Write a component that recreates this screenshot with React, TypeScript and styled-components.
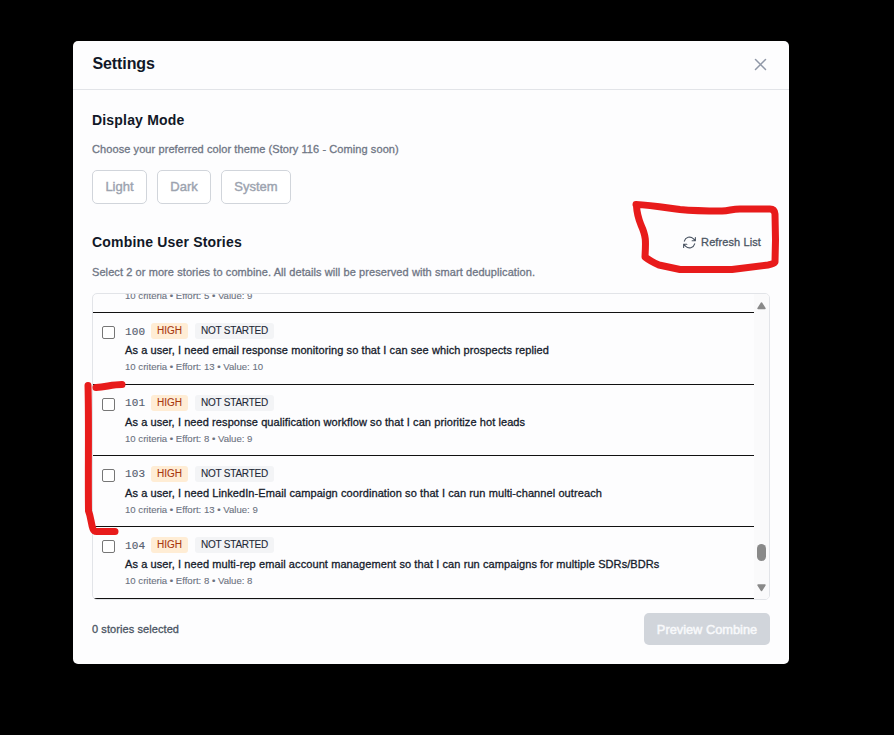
import React from "react";
import styled, { createGlobalStyle } from "styled-components";

const GlobalStyle = createGlobalStyle`
  * { box-sizing: border-box; }
  html, body { margin: 0; background: #000; }
  body { font-family: "Liberation Sans", Arial, sans-serif; overflow: hidden; }
  button { font-family: inherit; margin: 0; }
`;

const Backdrop = styled.main`
  position: relative;
  width: 894px;
  height: 735px;
  padding: 41px 0 0 73px;
  background: #000;
`;

const Dialog = styled.section`
  width: 716px;
  height: 623px;
  border-radius: 5px;
  background: #fdfdfe;
  overflow: hidden;
`;

const Header = styled.header`
  display: flex;
  justify-content: space-between;
  height: 49px;
  padding: 13px 22px 0 19.5px;
  border-bottom: 1px solid #e2e4e8;
`;

const Title = styled.h2`
  margin: 0;
  font-size: 16px;
  line-height: 20px;
  letter-spacing: -0.1px;
  color: #111827;
`;

const CloseButton = styled.button`
  display: flex;
  width: 13px;
  height: 13px;
  margin-top: 4px;
  padding: 0;
  border: 0;
  background: none;
  color: #9098a7;
`;

const Body = styled.div`
  display: flex;
  flex-direction: column;
  padding: 21px 19px 0;
`;

const SectionTitle = styled.h3`
  margin: 0;
  font-size: 14px;
  line-height: 18px;
  letter-spacing: 0.18px;
  color: #111827;
`;

const Hint = styled.p<{ $top: number }>`
  margin: ${(p) => p.$top}px 0 0;
  font-size: 11px;
  line-height: 14px;
  letter-spacing: 0.084px;
  color: #6f7685;
  -webkit-text-stroke: 0.3px currentColor;
`;

const ModeRow = styled.div`
  display: flex;
  gap: 10px;
  margin-top: 14px;
`;

const ModeButton = styled.button<{ $width: number }>`
  width: ${(p) => p.$width}px;
  height: 34px;
  padding: 0;
  border: 1px solid #d1d5db;
  border-radius: 5px;
  background: #fff;
  font-size: 13px;
  line-height: 16px;
  color: #9ca3af;
  -webkit-text-stroke: 0.4px currentColor;
`;

const SectionHead = styled.div`
  display: flex;
  justify-content: space-between;
  align-items: center;
  height: 18px;
  margin-top: 29px;
`;

const RefreshButton = styled.button`
  display: flex;
  align-items: center;
  gap: 5px;
  padding: 0 9px 0 0;
  border: 0;
  background: none;
  font-size: 11px;
  line-height: 14px;
  letter-spacing: 0.1px;
  color: #4b5563;
  -webkit-text-stroke: 0.3px currentColor;
`;

const ListFrame = styled.div`
  display: flex;
  height: 307px;
  margin-top: 14px;
  border: 1px solid #e2e4e8;
  border-radius: 5px;
  overflow: hidden;
`;

const Rows = styled.div`
  flex: 1;
  height: 305px;
  overflow: hidden;
`;

const Row = styled.label`
  display: flex;
  gap: 10px;
  height: 71.4px;
  padding: 10px 0 0 9px;
  border-bottom: 1px solid #111;
`;

/* The row scrolled mostly out of view above the first full one. */
const ScrolledRow = styled.div`
  display: flex;
  align-items: flex-start;
  height: 19.2px;
  padding-left: 32px;
  border-bottom: 1px solid #111;
`;

const Checkbox = styled.input`
  appearance: none;
  flex: none;
  width: 13px;
  height: 13px;
  margin: 3px 0 0;
  border: 1px solid #767676;
  border-radius: 2px;
  background: #fff;
`;

const Story = styled.div`
  display: flex;
  flex-direction: column;
`;

const Tags = styled.div`
  display: flex;
  align-items: center;
  height: 16px;
`;

const StoryId = styled.span`
  width: 26px;
  padding-top: 1px;
  font: 11px/14px "Liberation Mono", monospace;
  letter-spacing: 0.1px;
  color: #566070;
  -webkit-text-stroke: 0.15px currentColor;
`;

const Tag = styled.span<{ $tone: "high" | "neutral" }>`
  width: ${(p) => (p.$tone === "high" ? 37 : 79)}px;
  height: 16px;
  margin-right: 7px;
  border-radius: 3px;
  background: ${(p) => (p.$tone === "high" ? "#ffedd5" : "#f3f4f6")};
  color: ${(p) => (p.$tone === "high" ? "#a8380f" : "#1f2937")};
  font-size: 10px;
  line-height: 15px;
  letter-spacing: ${(p) => (p.$tone === "high" ? 0 : -0.22)}px;
  text-align: center;
  white-space: nowrap;
  -webkit-text-stroke: 0.1px currentColor;
`;

const StoryTitle = styled.div<{ $spacing: number }>`
  margin-top: 3px;
  font-size: 11px;
  line-height: 16px;
  letter-spacing: ${(p) => p.$spacing}px;
  white-space: nowrap;
  color: #151b2b;
  -webkit-text-stroke: 0.3px currentColor;
`;

const Meta = styled.div<{ $top: number }>`
  margin-top: ${(p) => p.$top}px;
  font-size: 9.6px;
  line-height: 13px;
  white-space: nowrap;
  color: #6b7280;
  -webkit-text-stroke: 0.1px currentColor;
`;

const Scrollbar = styled.div`
  display: flex;
  flex-direction: column;
  align-items: center;
  width: 15px;
  padding: 8px 0 7px;
  background: #fafafb;
`;

const Thumb = styled.div`
  width: 9px;
  height: 17px;
  margin: auto 0 23px;
  border-radius: 5px;
  background: #898989;
`;

const Footer = styled.footer`
  display: flex;
  justify-content: space-between;
  align-items: center;
  height: 32px;
  margin-top: 13px;
`;

const Count = styled.span`
  font-size: 11px;
  letter-spacing: 0.08px;
  color: #4b5563;
  -webkit-text-stroke: 0.3px currentColor;
`;

const PreviewButton = styled.button`
  width: 126px;
  height: 32px;
  padding: 0;
  border: 0;
  border-radius: 5px;
  background: #d1d5db;
  font-size: 12.8px;
  color: #f8f9fb;
  -webkit-text-stroke: 0.5px currentColor;
`;

const Markup = styled.svg`
  position: absolute;
  inset: 0;
  pointer-events: none;
`;

const modes = [
  { label: "Light", width: 55 },
  { label: "Dark", width: 54 },
  { label: "System", width: 70 },
];

const stories = [
  { id: "100", title: "As a user, I need email response monitoring so that I can see which prospects replied", effort: 13, value: 10, spacing: 0.088 },
  { id: "101", title: "As a user, I need response qualification workflow so that I can prioritize hot leads", effort: 8, value: 9, spacing: 0.083 },
  { id: "103", title: "As a user, I need LinkedIn-Email campaign coordination so that I can run multi-channel outreach", effort: 13, value: 9, spacing: 0.09 },
  { id: "104", title: "As a user, I need multi-rep email account management so that I can run campaigns for multiple SDRs/BDRs", effort: 8, value: 8, spacing: 0.09 },
];

const CloseIcon = () => (
  <svg width="13" height="13" viewBox="0 0 13 13" fill="none" stroke="currentColor" strokeWidth="1.5" strokeLinecap="round">
    <path d="M1.5 1.5 11.5 11.5M11.5 1.5 1.5 11.5" />
  </svg>
);

const RefreshIcon = () => (
  <svg width="13" height="13" viewBox="2 2 20 20" fill="none" stroke="currentColor" strokeWidth="1.7" strokeLinecap="round" strokeLinejoin="round">
    <path d="M16.023 9.348h4.992v-.001M2.985 19.644v-4.992m0 0h4.992m-4.993 0l3.181 3.183a8.250 8.250 0 0013.803-3.700M4.031 9.865a8.250 8.250 0 0113.803-3.700l3.181 3.182m0-4.991v4.990" />
  </svg>
);

const Arrow = ({ down = false }: { down?: boolean }) => (
  <svg width="9" height="8" viewBox="0 0 9 8">
    <path d={down ? "M1 1h7L4.5 6.5Z" : "M1 6.5h7L4.5 1Z"} fill="#898989" stroke="#898989" strokeWidth="1.4" strokeLinejoin="round" />
  </svg>
);

export default function App() {
  return (
    <>
      <GlobalStyle />
      <Backdrop>
        <Dialog>
          <Header>
            <Title>Settings</Title>
            <CloseButton aria-label="Close"><CloseIcon /></CloseButton>
          </Header>
          <Body>
            <SectionTitle>Display Mode</SectionTitle>
            <Hint $top={13}>Choose your preferred color theme (Story 116 - Coming soon)</Hint>
            <ModeRow>
              {modes.map((m) => (
                <ModeButton key={m.label} $width={m.width}>{m.label}</ModeButton>
              ))}
            </ModeRow>
            <SectionHead>
              <SectionTitle>Combine User Stories</SectionTitle>
              <RefreshButton><RefreshIcon />Refresh List</RefreshButton>
            </SectionHead>
            <Hint $top={14}>Select 2 or more stories to combine. All details will be preserved with smart deduplication.</Hint>
            <ListFrame>
              <Rows>
                <ScrolledRow>
                  <Meta $top={-5}>10 criteria • Effort: 5 • Value: 9</Meta>
                </ScrolledRow>
                {stories.map((s) => (
                  <Row key={s.id}>
                    <Checkbox type="checkbox" />
                    <Story>
                      <Tags>
                        <StoryId>{s.id}</StoryId>
                        <Tag $tone="high">HIGH</Tag>
                        <Tag $tone="neutral">NOT STARTED</Tag>
                      </Tags>
                      <StoryTitle $spacing={s.spacing}>{s.title}</StoryTitle>
                      <Meta $top={2}>10 criteria • Effort: {s.effort} • Value: {s.value}</Meta>
                    </Story>
                  </Row>
                ))}
              </Rows>
              <Scrollbar>
                <Arrow />
                <Thumb />
                <Arrow down />
              </Scrollbar>
            </ListFrame>
            <Footer>
              <Count>0 stories selected</Count>
              <PreviewButton>Preview Combine</PreviewButton>
            </Footer>
          </Body>
        </Dialog>
        <Markup width="894" height="735" viewBox="0 0 894 735" fill="none" stroke="#e81b1b" strokeWidth="7" strokeLinecap="round" strokeLinejoin="round">
          <path d="M636 204.500C650 205 665 207.500 680 209.500C695 211 712 211 722 211C730 210.500 732 209 740 209L770 209Q774.500 209 775 214L775.500 240L775 262Q774 264 768 265L732 269.500L680 269.500L659 265Q650 261 645 257C646 240 646 236 641 225Q637 215 636.500 206" />
          <path d="M122 384.500C112 384.500 106 387 96 387.500M88 385.500C89 420 88 470 88.500 511C91 517 91 524 93 529Q94 532 98 531.500L115 531.500" />
        </Markup>
      </Backdrop>
    </>
  );
}
